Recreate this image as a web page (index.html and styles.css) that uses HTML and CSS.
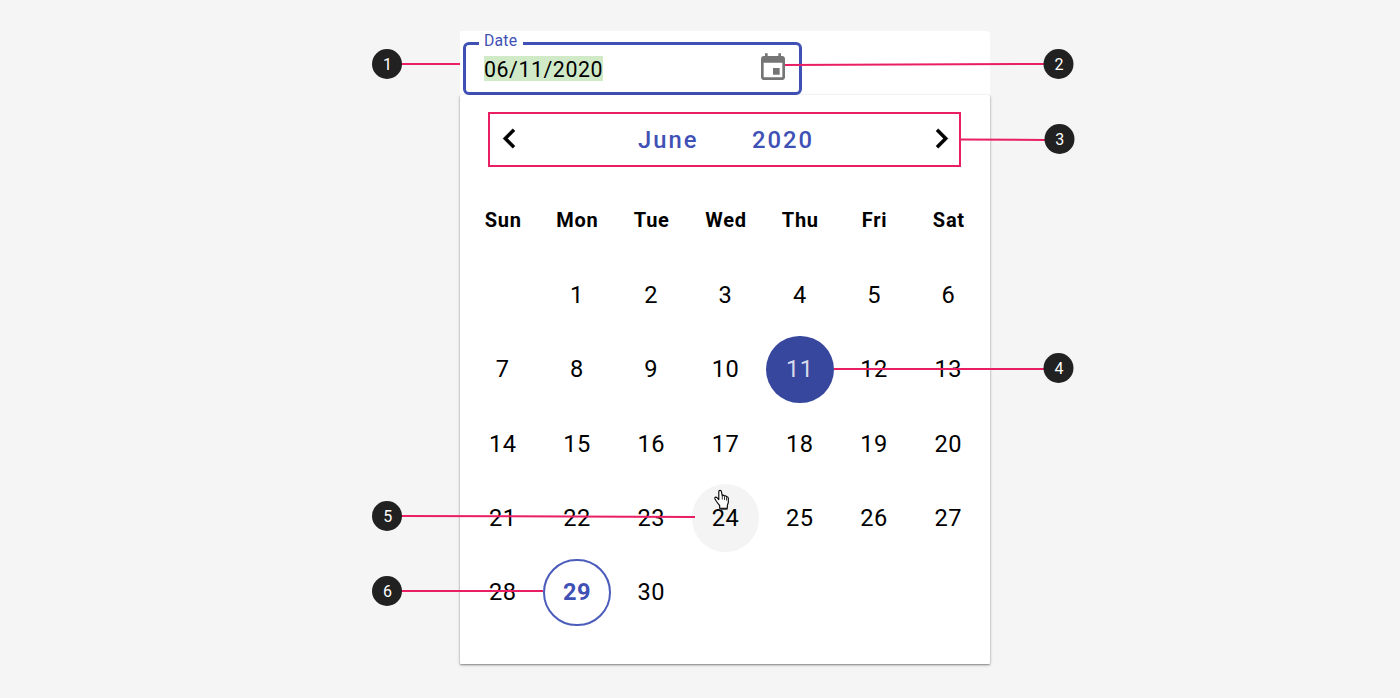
FILE: index.html
```html
<!DOCTYPE html>
<html lang="en">
<head>
<meta charset="utf-8">
<title>Date picker anatomy</title>
<link rel="stylesheet" href="styles.css">
</head>
<body>
<main class="stage">
  <section class="picker">
    <div class="field-panel">
      <div class="field">
        <span class="field-label">Date</span>
        <span class="field-value">06/11/2020</span>
        <svg class="field-icon" viewBox="0 0 24 24"><path d="M17 12h-5v5h5v-5zM16 1v2H8V1H6v2H5c-1.11 0-1.99.9-1.99 2L3 19c0 1.1.89 2 2 2h14c1.1 0 2-.9 2-2V5c0-1.1-.9-2-2-2h-1V1h-2zm3 18H5V8h14v11z"/></svg>
      </div>
    </div>
    <div class="calendar">
      <header class="nav">
        <svg class="chevron" viewBox="0 0 24 24"><path d="M15.41 7.41L14 6l-6 6 6 6 1.41-1.41L10.83 12z"/></svg>
        <div class="title"><span class="month">June</span><span class="year">2020</span></div>
        <svg class="chevron" viewBox="0 0 24 24"><path d="M8.59 16.59L10 18l6-6-6-6-1.41 1.41L13.17 12z"/></svg>
      </header>
      <div class="grid">
        <span class="cell weekday">Sun</span><span class="cell weekday">Mon</span><span class="cell weekday">Tue</span><span class="cell weekday">Wed</span><span class="cell weekday">Thu</span><span class="cell weekday">Fri</span><span class="cell weekday">Sat</span>
        <span class="cell"></span><span class="cell">1</span><span class="cell">2</span><span class="cell">3</span><span class="cell">4</span><span class="cell">5</span><span class="cell">6</span>
        <span class="cell">7</span><span class="cell">8</span><span class="cell">9</span><span class="cell">10</span><span class="cell"><b class="day selected">11</b></span><span class="cell">12</span><span class="cell">13</span>
        <span class="cell">14</span><span class="cell">15</span><span class="cell">16</span><span class="cell">17</span><span class="cell">18</span><span class="cell">19</span><span class="cell">20</span>
        <span class="cell">21</span><span class="cell">22</span><span class="cell">23</span><span class="cell"><b class="day hovered">24</b></span><span class="cell">25</span><span class="cell">26</span><span class="cell">27</span>
        <span class="cell">28</span><span class="cell"><b class="day today">29</b></span><span class="cell">30</span>
      </div>
    </div>
  </section>
  <svg class="callouts" viewBox="0 0 1400 698">
    <g class="lines">
      <path d="M400 64H460"/><path d="M785 65L1045 64"/><path d="M961 139.4L1046 140"/>
      <path d="M834 369H1045"/><path d="M400 516L695 517"/><path d="M400 591H543"/>
    </g>
    <g class="dots">
      <circle cx="387" cy="64" r="15"/><circle cx="1058.5" cy="64" r="15"/><circle cx="1059.5" cy="139" r="15"/>
      <circle cx="1058.5" cy="368" r="15"/><circle cx="387" cy="516" r="15"/><circle cx="387" cy="591" r="15"/>
    </g>
    <g class="numbers">
      <text x="387.5" y="70">1</text><text x="1059" y="70">2</text><text x="1059.7" y="145">3</text>
      <text x="1059" y="374">4</text><text x="387.7" y="522">5</text><text x="387.5" y="597">6</text>
    </g>
    <path class="cursor-cuff" d="M719.5 506H727.5V510H719.5Z"/>
    <path class="cursor" d="M719.7 508.2V505.7L716.5 501.5L714.9 498.8C714.2 497.3 715.8 496.6 717 497.7L718.8 499.7V491.4C718.8 490 721.2 490 721.4 491.4L722.2 495.6C722.4 494.8 724.1 494.9 724.4 496.2C724.8 495.4 726.2 495.8 726.5 497C727.2 496.4 728.2 497 728.3 498.1V502.5L727.3 505.7V508.2Z"/>
    <path class="cursor-folds" d="M722.3 496V499.5M724.5 496.7V500M726.5 497.5V500.5"/>
  </svg>
</main>
</body>
</html>
```

FILE: styles.css
```css
body {
  margin: 0;
  background: #f5f5f5;
  color: #000;
  font-family: Roboto, "Liberation Sans", sans-serif;
}

.stage {
  position: relative;
  box-sizing: border-box;
  height: 698px;
  padding-top: 31px;
  overflow: hidden;
}

.picker {
  width: 530px;
  margin-left: 460px;
}

.field-panel {
  box-sizing: border-box;
  height: 64px;
  padding: 11px 0 0 3px;
  background: #fff;
  border-radius: 0 4px 0 0;
}

.field {
  position: relative;
  box-sizing: border-box;
  display: flex;
  align-items: center;
  justify-content: space-between;
  width: 339px;
  height: 53px;
  padding: 0 10px 0 18px;
  border: 3px solid #3f51b5;
  border-radius: 6px;
}

.field-label {
  position: absolute;
  left: 13px;
  top: -13px;
  padding: 0 6px 0 5px;
  background: #fff;
  color: #3f51b5;
  font-size: 15.8px;
  line-height: 18px;
  letter-spacing: 0.2px;
}

.field-value {
  height: 25px;
  padding-top: 1px;
  box-sizing: border-box;
  background: #d0eac8;
  font-size: 21.33px;
  line-height: 25px;
  letter-spacing: 0.55px;
}

.field-icon {
  width: 32px;
  height: 32px;
  margin-top: -1px;
  fill: #757575;
}

.calendar {
  position: relative;
  box-sizing: border-box;
  height: 569px;
  padding: 17px 4.5px 0 5.5px;
  background: #fff;
  border-radius: 0 2px 1px 1px;
  box-shadow: 0 1px 2px rgba(0, 0, 0, 0.42), 0 1px 4px rgba(0, 0, 0, 0.12);
}

.nav {
  box-sizing: border-box;
  display: flex;
  align-items: center;
  justify-content: space-between;
  width: 473px;
  height: 55px;
  margin: 0 0 16px 22.5px;
  border: 2px solid #e91e63;
}

.chevron {
  width: 39px;
  height: 39px;
  margin-top: -2px;
  stroke: #000;
  stroke-width: 0.25;
}

.nav .chevron:last-child {
  margin-right: -2px;
}

.title {
  display: flex;
  gap: 53.5px;
  padding-left: 1px;
  color: #3f51b5;
  font-size: 23.8px;
  font-weight: 500;
  line-height: 28px;
  letter-spacing: 2px;
}

.grid {
  display: grid;
  grid-template-columns: repeat(7, 1fr);
  grid-auto-rows: 74.35px;
}

.cell {
  display: flex;
  align-items: center;
  justify-content: center;
  padding-top: 1px;
  font-size: 23.6px;
  letter-spacing: 0.5px;
}

.weekday {
  padding: 0 0 0 1px;
  font-size: 20px;
  font-weight: 700;
  letter-spacing: 0.75px;
}

.day {
  box-sizing: border-box;
  display: flex;
  align-items: center;
  justify-content: center;
  width: 67.5px;
  height: 67.5px;
  border-radius: 50%;
  font-weight: 400;
}

.selected {
  background: #37479e;
  color: #d7daec;
}

.hovered {
  background: #f4f4f4;
}

.today {
  border: 2px solid #4b5cba;
  color: #3f51b5;
  font-weight: 700;
}

.callouts {
  position: absolute;
  inset: 0;
  width: 1400px;
  height: 698px;
}

.lines {
  stroke: #e91e63;
  stroke-width: 2;
}

.dots {
  fill: #212121;
}

.numbers {
  fill: #fff;
  font-size: 16px;
  text-anchor: middle;
}

.cursor-cuff {
  fill: #555;
}

.cursor {
  fill: #fff;
  stroke: #000;
  stroke-width: 1.1;
  stroke-linejoin: round;
}

.cursor-folds {
  fill: none;
  stroke: #000;
  stroke-width: 0.8;
}
```
